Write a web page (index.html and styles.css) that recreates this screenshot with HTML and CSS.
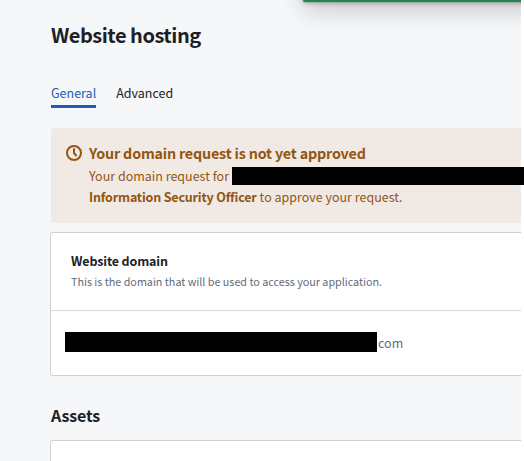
FILE: index.html
```html
<!DOCTYPE html>
<html lang="en">
<head>
<meta charset="utf-8">
<title>Website hosting</title>
<link rel="stylesheet" href="styles.css">
</head>
<body>
<div class="page">
  <div class="toast-area"><div class="toast"></div></div>
  <h1><span>Website hosting</span></h1>
  <nav class="tabs">
    <a class="tab active">General</a>
    <a class="tab">Advanced</a>
  </nav>
  <section class="callout">
    <svg class="clock" viewBox="0 0 16 16" width="16" height="16" fill="none" stroke="currentColor" stroke-width="2">
      <circle cx="8" cy="8" r="7"/>
      <path d="M8 4V8l2 2.4" stroke-linecap="round" stroke-linejoin="round"/>
    </svg>
    <div class="message">
      <h2>Your domain request is not yet approved</h2>
      <p class="line"><span class="request">Your domain request for</span><span class="redacted"></span></p>
      <p class="line"><b>Information Security Officer</b><span class="approve">to approve your request.</span></p>
    </div>
  </section>
  <section class="card">
    <header>
      <h3>Website domain</h3>
      <p class="hint">This is the domain that will be used to access your application.</p>
    </header>
    <div class="domain"><span class="redacted"></span><span class="suffix">com</span></div>
  </section>
  <h2 class="assets">Assets</h2>
  <section class="card next"></section>
</div>
</body>
</html>
```

FILE: styles.css
```css
* { box-sizing: border-box; }
html { background: #fff; }
body {
  margin: 0;
  height: 461px;
  overflow: hidden;
  font-family: "Noto Sans CJK JP", "Open Sans", sans-serif;
  font-size: 12.5px;
  color: #1c2127;
}
h1, h2, h3, p { margin: 0; white-space: nowrap; }
.page {
  position: relative;
  width: 521px;
  height: 461px;
  padding: 20px 0 0 51px;
  background: #f6f7f9;
}
.toast-area {
  position: absolute;
  top: 0;
  right: 0;
  width: 260px;
  height: 50px;
  overflow: hidden;
}
.toast {
  width: 300px;
  height: 42px;
  margin: -40px 0 0 42px;
  border-radius: 2px;
  background: #238551;
  box-shadow: 0 0 0 1px rgba(17, 20, 24, .1), 0 2px 4px rgba(17, 20, 24, .2), 0 8px 24px rgba(17, 20, 24, .2);
}
h1 { height: 62px; font-size: 20px; line-height: 30px; font-weight: 700; letter-spacing: -.47px; }
.tabs { display: flex; gap: 20px; height: 26px; margin-bottom: 20px; }
.tab { height: 26px; line-height: 22px; }
.active { color: #215db0; border-bottom: 3px solid #215db0; }
.callout {
  display: flex;
  gap: 7px;
  height: 95px;
  padding: 14px 0 0 15px;
  border-radius: 2px 0 0 2px;
  background: #f1e9e4;
  color: #935610;
}
.clock { margin-top: 3px; flex: none; }
.message { flex: 1; min-width: 0; }
.message h2 { font-size: 14.3px; line-height: 22px; height: 23px; letter-spacing: -.18px; }
.line { display: flex; height: 21px; line-height: 21px; }
.line .redacted { width: 292px; height: 18px; margin: 2px 0 0 2px; background: #000; flex: none; }
.request { width: 141px; flex: none; }
.line b { margin-right: 3px; letter-spacing: -.18px; }
.card {
  height: 144px;
  margin: 9px 0 0 -1px;
  border: 1px solid #d0d2d6;
  border-right: 0;
  border-radius: 3px 0 0 3px;
  background: #fff;
}
.card header { height: 78px; padding: 18px 0 0 20px; border-bottom: 1px solid #d8dade; }
.card h3 { font-size: 12.5px; line-height: 20px; height: 21px; letter-spacing: -.15px; }
.hint { font-size: 10.75px; line-height: 20px; height: 20px; color: #5f6b7c; }
.domain { display: flex; padding: 21px 0 0 14px; line-height: 22px; color: #5f6b7c; }
.domain .redacted { width: 312px; height: 20px; background: #000; }
.suffix { margin-left: 1px; }
.assets { margin-top: 26px; height: 29px; font-size: 16px; line-height: 26px; letter-spacing: -.15px; }
.card.next { height: 21px; margin-top: 9px; border-bottom: 0; border-radius: 3px 0 0 0; }
```
